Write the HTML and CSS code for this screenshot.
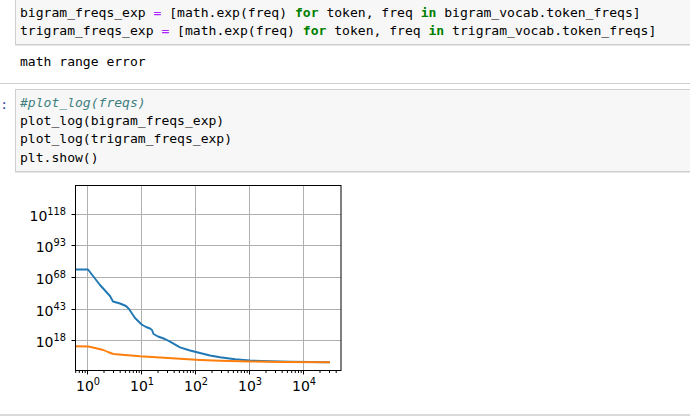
FILE: index.html
```html
<!DOCTYPE html>
<html>
<head>
<meta charset="utf-8">
<link rel="stylesheet" href="styles.css">
</head>
<body>
<div class="nb">
  <div class="cell cell-first">
    <div class="cell-row">
      <div class="prompt"></div>
      <div class="input input-first"><pre class="code">bigram_freqs_exp <span class="o">=</span> [math.exp(freq) <span class="k">for</span> token, freq <span class="k">in</span> bigram_vocab.token_freqs]
trigram_freqs_exp <span class="o">=</span> [math.exp(freq) <span class="k">for</span> token, freq <span class="k">in</span> trigram_vocab.token_freqs]</pre></div>
    </div>
    <div class="output-text"><pre class="code">math range error</pre></div>
  </div>

  <div class="cell cell-second">
    <div class="cell-row">
      <div class="prompt"><span class="prompt-text">:</span></div>
      <div class="input"><pre class="code"><span class="c">#plot_log(freqs)</span>
plot_log(bigram_freqs_exp)
plot_log(trigram_freqs_exp)
plt.show()</pre></div>
    </div>
    <div class="output-plot">
      <svg class="plot" width="345" height="230" viewBox="0 0 345 230" xmlns="http://www.w3.org/2000/svg">
        <g transform="translate(-15 -176)">
          <rect x="75.5" y="186.5" width="265.5" height="185" fill="#ffffff"/>
          <g stroke="#b0b0b0" stroke-width="1" fill="none">
            <path d="M87.5 186.5V371.5M141.5 186.5V371.5M195.5 186.5V371.5M249.5 186.5V371.5M303.5 186.5V371.5"/>
            <path d="M75.5 215.5H341M75.5 246.5H341M75.5 278.5H341M75.5 310.5H341M75.5 341.5H341"/>
          </g>
          <polyline fill="none" stroke="#1f77b4" stroke-width="1.9" stroke-linejoin="round"
            points="75.5,270.5 88,270.5 100,286 110,297 113,302.5 120,304.5 126,307 129,310 135,319 141.7,325.5 146,328 150,329.5 152,331 153.5,335 158,337.5 165,340 170,342.7 180,348.3 190,351.5 200,354 210,356.5 220,358.3 235,360.3 250,361.5 270,362.3 290,362.8 330,363.3"/>
          <polyline fill="none" stroke="#ff7f0e" stroke-width="1.9" stroke-linejoin="round"
            points="75.5,347.3 88.3,347.5 95,349 103.3,351 108,353 113.3,355 125,356 140,357.3 160,358.5 180,359.8 200,361 220,361.8 250,362.5 280,363 330,363.3"/>
          <rect x="75.5" y="186.5" width="265.5" height="185" fill="none" stroke="#000" stroke-width="1"/>
          <g stroke="#000" stroke-width="1" fill="none">
            <path d="M87.5 372V375.5M141.5 372V375.5M195.5 372V375.5M249.5 372V375.5M303.5 372V375.5"/>
            <path d="M75.7 372v2M79.3 372v2M82.5 372v2M85.2 372v2M104 372v2M113.5 372v2M120.2 372v2M125.4 372v2M129.7 372v2M133.3 372v2M136.5 372v2M139.2 372v2M158 372v2M167.5 372v2M174.2 372v2M179.4 372v2M183.7 372v2M187.3 372v2M190.5 372v2M193.2 372v2M212 372v2M221.5 372v2M228.2 372v2M233.4 372v2M237.7 372v2M241.3 372v2M244.5 372v2M247.2 372v2M266 372v2M275.5 372v2M282.2 372v2M287.4 372v2M291.7 372v2M295.3 372v2M298.5 372v2M301.2 372v2M320 372v2M329.5 372v2M336.2 372v2"/>
            <path d="M71.5 215.5H75M71.5 246.5H75M71.5 278.5H75M71.5 310.5H75M71.5 341.5H75"/>
          </g>
          <g class="ticklabel" text-anchor="end">
            <text x="66" y="221.5">10<tspan class="sup" dy="-5.7">118</tspan></text>
            <text x="66" y="253">10<tspan class="sup" dy="-5.7">93</tspan></text>
            <text x="66" y="284.5">10<tspan class="sup" dy="-5.7">68</tspan></text>
            <text x="66" y="316.5">10<tspan class="sup" dy="-5.7">43</tspan></text>
            <text x="66" y="347.5">10<tspan class="sup" dy="-5.7">18</tspan></text>
          </g>
          <g class="ticklabel" text-anchor="middle">
            <text x="88" y="391.5">10<tspan class="sup" dy="-5.7">0</tspan></text>
            <text x="142" y="391.5">10<tspan class="sup" dy="-5.7">1</tspan></text>
            <text x="196" y="391.5">10<tspan class="sup" dy="-5.7">2</tspan></text>
            <text x="250" y="391.5">10<tspan class="sup" dy="-5.7">3</tspan></text>
            <text x="304" y="391.5">10<tspan class="sup" dy="-5.7">4</tspan></text>
          </g>
        </g>
      </svg>
    </div>
  </div>
</div>
</body>
</html>
```

FILE: styles.css
```css
html, body {
  margin: 0;
  padding: 0;
  background: #ffffff;
}

body {
  overflow: hidden;
  width: 690px;
  height: 419px;
}

.nb {
  width: 690px;
}

.cell {
  display: flex;
  flex-direction: column;
}

.cell-first {
  border-bottom: 1px solid #cfcfcf;
  padding-bottom: 11.5px;
}

.cell-second {
  padding-top: 5px;
  border-bottom: 2px solid #dadada;
  padding-bottom: 9px;
}

.cell-row {
  display: flex;
  align-items: flex-start;
}

.prompt {
  width: 15px;
  flex: none;
  display: flex;
  justify-content: flex-end;
  padding-top: 7px;
  box-sizing: border-box;
  padding-right: 7px;
  font-family: "DejaVu Sans Mono", monospace;
  font-size: 13.05px;
  line-height: 18.2px;
  color: #303f9f;
  white-space: nowrap;
}

.prompt-text {
  flex: none;
}

.input {
  flex: 1;
  margin-right: -10px;
  background: #f7f7f7;
  border: 1px solid #cfcfcf;
  box-shadow: 0 1px 0 #e6e6e6;
  padding: 4px;
}

.input-first {
  margin-top: -1px;
}

.code {
  margin: 0;
  font-family: "DejaVu Sans Mono", monospace;
  font-size: 13.05px;
  line-height: 18.2px;
  color: #000000;
  white-space: pre;
}

.o {
  color: #aa22ff;
}

.k {
  color: #008000;
  font-weight: bold;
}

.c {
  color: #408080;
  font-style: italic;
}

.output-text {
  padding: 8px 0 0 20px;
}

.output-text .code {
  line-height: 18px;
}

.output-plot {
  padding: 3px 0 0 15px;
  line-height: 0;
}

.plot {
  display: block;
}

.ticklabel text {
  font-family: "DejaVu Sans", sans-serif;
  font-size: 14px;
  fill: #000000;
}

.ticklabel .sup {
  font-size: 9.8px;
}
```
